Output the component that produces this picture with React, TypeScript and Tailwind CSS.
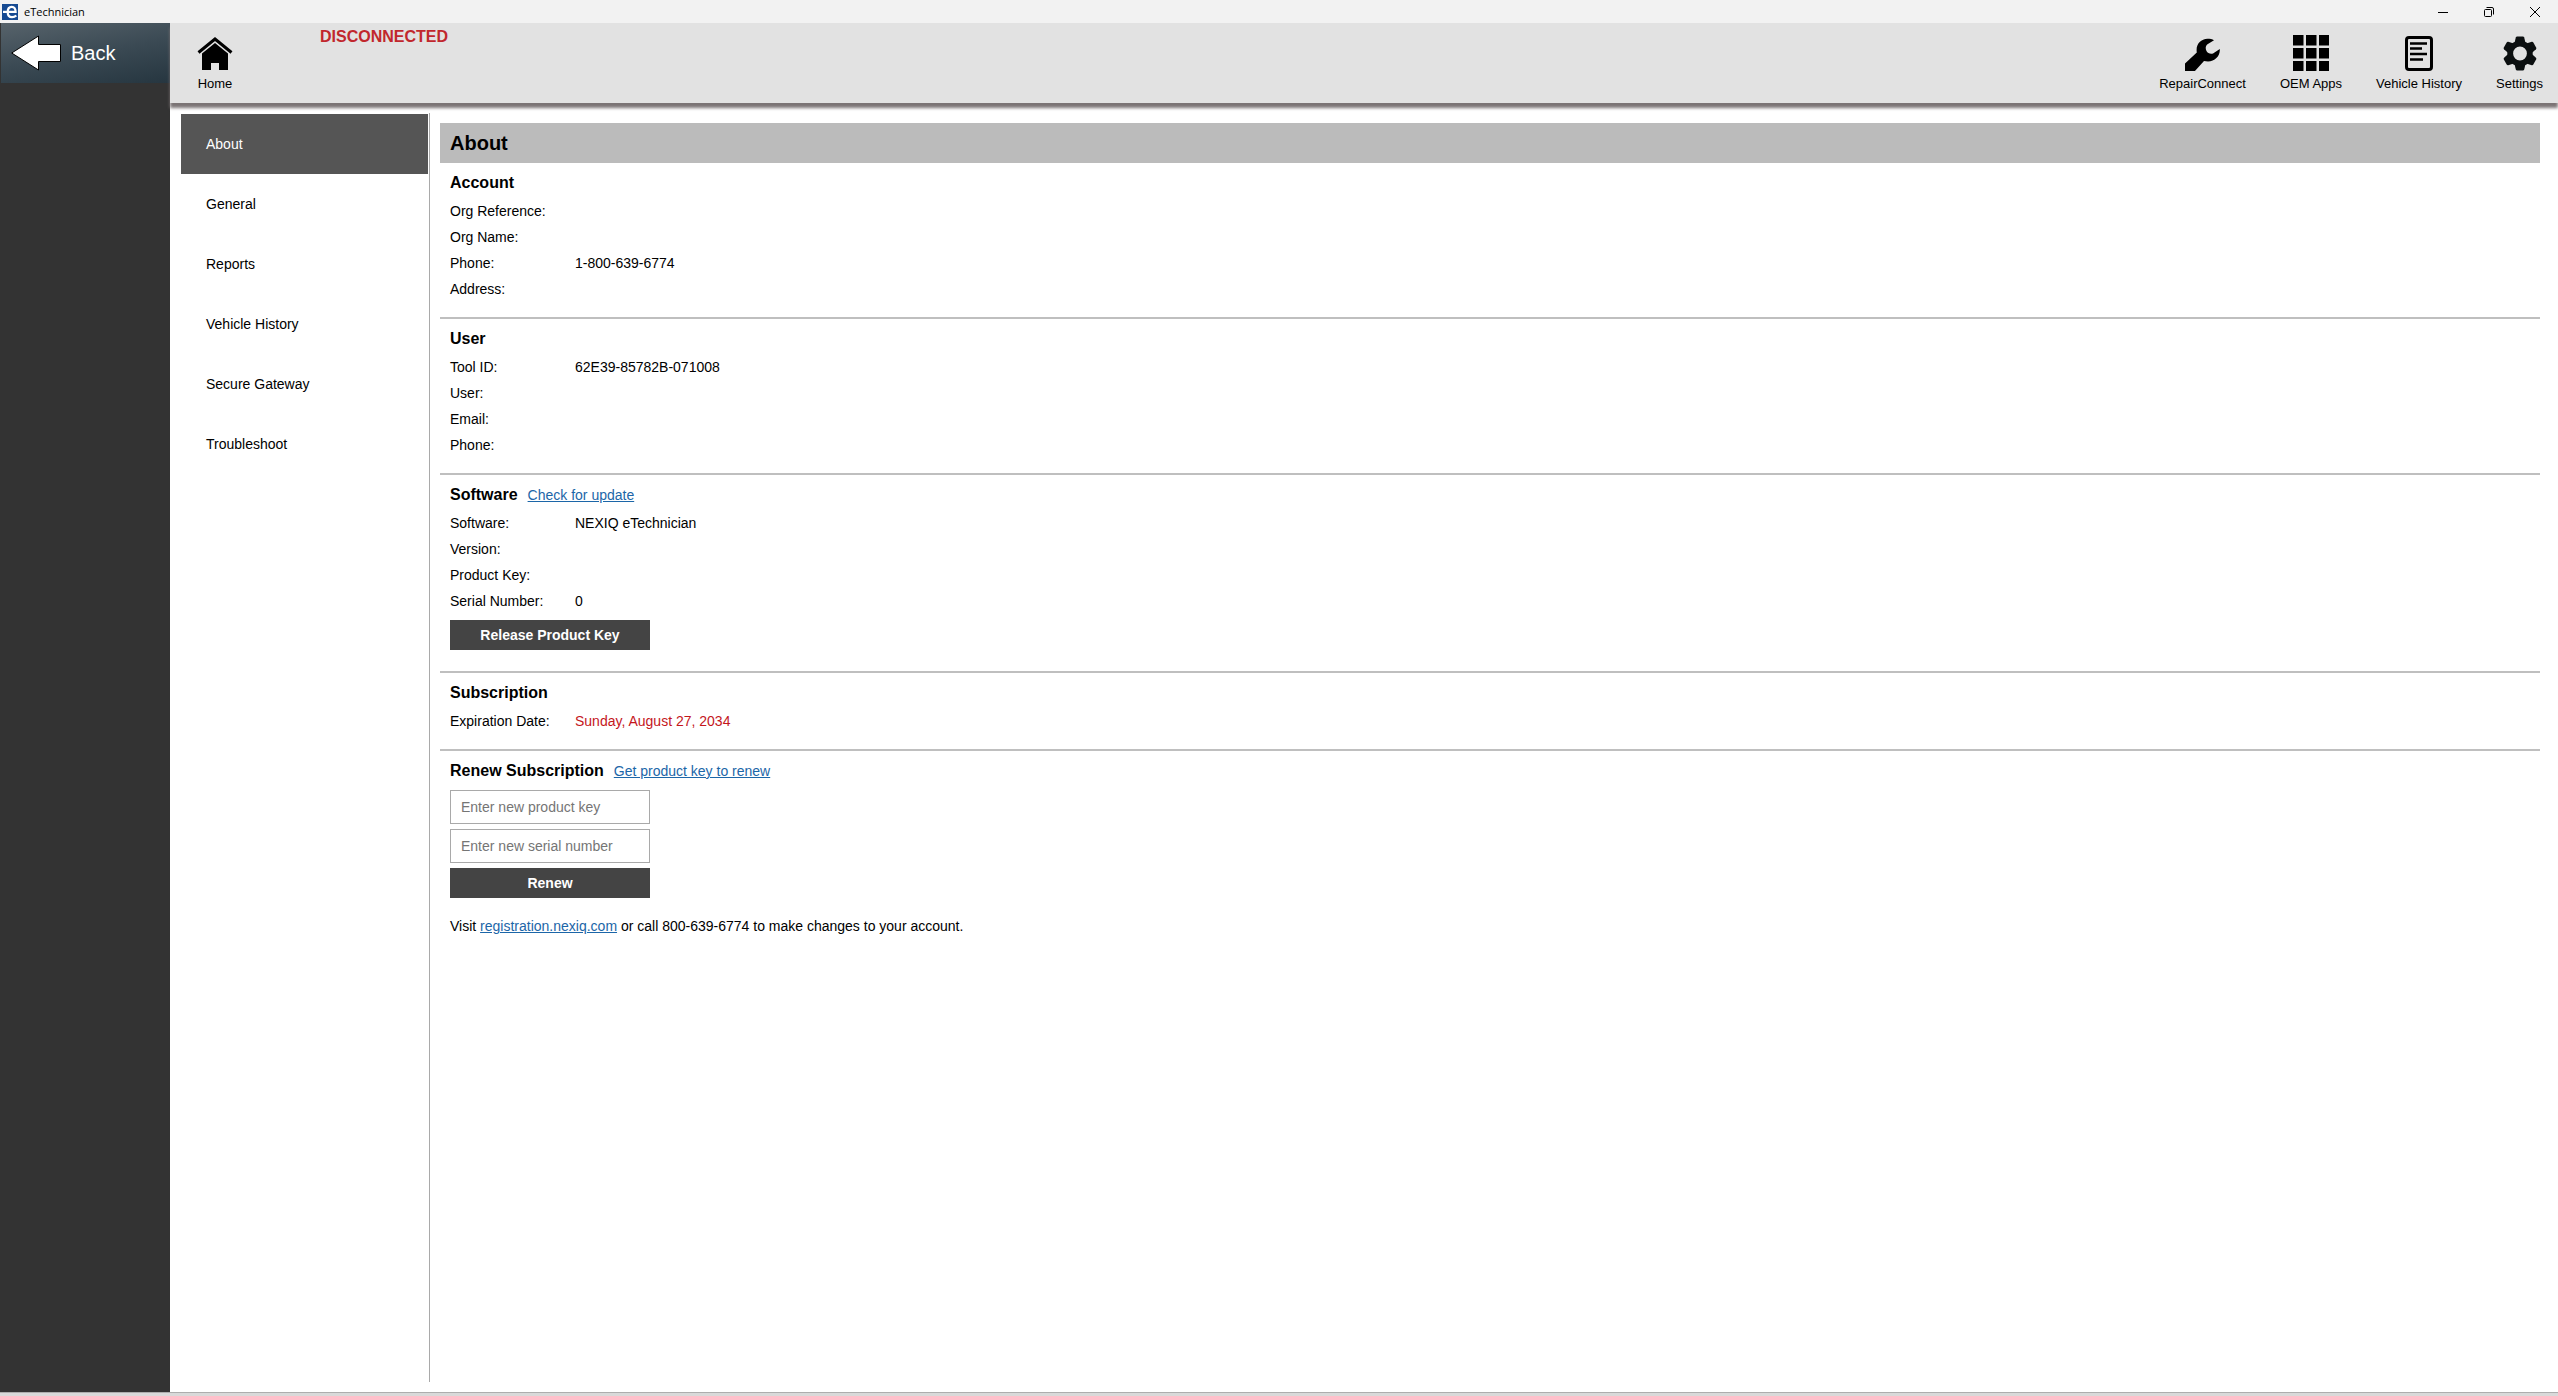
import { useState } from 'react'
import type { ReactNode } from 'react'

interface FieldRow {
    label: string
    value?: string
    alert?: boolean
}

interface SectionProps {
    title: string
    link?: string
    rows?: FieldRow[]
    last?: boolean
    children?: ReactNode
}

const MENU = ['About', 'General', 'Reports', 'Vehicle History', 'Secure Gateway', 'Troubleshoot']

const ACCOUNT: FieldRow[] = [
    { label: 'Org Reference:' },
    { label: 'Org Name:' },
    { label: 'Phone:', value: '1-800-639-6774' },
    { label: 'Address:' },
]

const USER: FieldRow[] = [
    { label: 'Tool ID:', value: '62E39-85782B-071008' },
    { label: 'User:' },
    { label: 'Email:' },
    { label: 'Phone:' },
]

const SOFTWARE: FieldRow[] = [
    { label: 'Software:', value: 'NEXIQ eTechnician' },
    { label: 'Version:' },
    { label: 'Product Key:' },
    { label: 'Serial Number:', value: '0' },
]

const SUBSCRIPTION: FieldRow[] = [
    { label: 'Expiration Date:', value: 'Sunday, August 27, 2034', alert: true },
]

function HomeIcon() {
    return (
        <svg width="36" height="36" viewBox="0 0 36 36">
            <path d="M1.500 17.500 18 4l16.500 13.500" fill="none" stroke="#000" strokeWidth="3" />
            <path d="M18 8 31 18.500V35h-9v-7h-8v7H5V18.500z" />
        </svg>
    )
}

function WrenchIcon() {
    return (
        <svg width="36" height="36" viewBox="0 0 36 36">
            <path d="M0 28.500 11.800 17.500C10.500 9.500 15.500 4 22.500 3.800c2.500 0 4.800.4 6.500 1.400l-6.500 4c-2 1.500-2.300 4.300-1 6.800 1.200 2.300 4 3.200 6.500 2.400l6.800-4.400c.6 7-4.800 12.400-11.800 12.500-1.500 0-2.800-.2-4-.4L9.500 36.500H0z" />
        </svg>
    )
}

function GridIcon() {
    return (
        <svg width="36" height="36" viewBox="0 0 36 36">
            {[0, 13, 26].map((y) =>
                [0, 13, 26].map((x) => <rect key={`${x}-${y}`} x={x} y={y} width="10.500" height="10.500" />)
            )}
        </svg>
    )
}

function HistoryIcon() {
    return (
        <svg width="36" height="36" viewBox="0 0 36 36">
            <rect x="5.500" y="2.500" width="25" height="32" rx="2.500" fill="none" stroke="#000" strokeWidth="3" />
            <path d="M9 8.500h17M9 13.500h12M9 19h17M9 24.500h13" stroke="#000" strokeWidth="2.500" />
        </svg>
    )
}

function GearIcon() {
    return (
        <svg width="36" height="36" viewBox="0 0 36 36">
            <g fill="#0b0f10">
                {[0, 60, 120, 180, 240, 300].map((deg) => (
                    <path
                        key={deg}
                        d="M12.500 8 13.800 2.500Q14.100 1.500 15.200 1.500h5.600Q21.900 1.500 22.200 2.500L23.500 8z"
                        transform={`rotate(${deg} 18 18.500)`}
                    />
                ))}
            </g>
            <circle cx="18" cy="18.500" r="9.800" fill="none" stroke="#0b0f10" strokeWidth="5.800" />
        </svg>
    )
}

const TOOLS = [
    { label: 'RepairConnect', icon: <WrenchIcon /> },
    { label: 'OEM Apps', icon: <GridIcon /> },
    { label: 'Vehicle History', icon: <HistoryIcon /> },
    { label: 'Settings', icon: <GearIcon /> },
]

function ToolButton({ label, icon }: { label: string; icon: ReactNode }) {
    return (
        <button className="flex flex-col items-center text-[13px] leading-4">
            <span className="mb-[5px] flex h-9 items-center justify-center">{icon}</span>
            {label}
        </button>
    )
}

function TitleBar() {
    return (
        <div className="flex h-[23px] shrink-0 items-center bg-[#f2f2f2]">
            <svg className="ml-0.5" width="16" height="16" viewBox="0 0 16 16">
                <rect width="16" height="16" fill="#164a92" />
                <path
                    d="M1 7.800h12.600C13.600 4.600 12.200 2.800 9.800 2.800 7.200 2.800 5.700 4.800 5.700 8s1.500 5.200 4.300 5.200c1.800 0 3.200-.6 4.300-1.700"
                    fill="none"
                    stroke="#fff"
                    strokeWidth="2.200"
                />
            </svg>
            <span className="ml-1.5 font-['Open_Sans',sans-serif] text-[11px] text-black">eTechnician</span>
            <div className="ml-auto flex">
                <button aria-label="Minimize" className="flex h-5 w-[46px] items-center justify-center">
                    <svg width="10" height="10" viewBox="0 0 10 10">
                        <path d="M0 5.500h10" stroke="#000" />
                    </svg>
                </button>
                <button aria-label="Restore" className="flex h-5 w-[46px] items-center justify-center">
                    <svg width="10" height="10" viewBox="0 0 10 10" fill="none" stroke="#000">
                        <rect x=".5" y="2.500" width="7" height="7" rx="1" />
                        <path d="M2.500.5H8A1.500 1.500 0 0 1 9.500 2v5.500" />
                    </svg>
                </button>
                <button aria-label="Close" className="flex h-5 w-[46px] items-center justify-center">
                    <svg width="10" height="10" viewBox="0 0 10 10">
                        <path d="m0 0 10 10M10 0 0 10" stroke="#000" />
                    </svg>
                </button>
            </div>
        </div>
    )
}

function Section({ title, link, rows = [], last, children }: SectionProps) {
    return (
        <section className={last ? 'px-2.5 pt-2' : 'border-b-2 border-[#bfbfbf] px-2.5 pt-2 pb-[15px]'}>
            <div className="mb-[3px] flex h-6 items-center gap-2.5">
                <h2 className="text-base font-bold">{title}</h2>
                {link && (
                    <a href="#" className="text-[#1c66a8] underline">
                        {link}
                    </a>
                )}
            </div>
            <dl>
                {rows.map((row) => (
                    <div key={row.label} className="flex h-[26px] items-center">
                        <dt className="w-[125px]">{row.label}</dt>
                        <dd className={row.alert ? 'text-[#c4161c]' : ''}>{row.value}</dd>
                    </div>
                ))}
            </dl>
            {children}
        </section>
    )
}

export default function App() {
    const [active, setActive] = useState('About')
    const [productKey, setProductKey] = useState('')
    const [serial, setSerial] = useState('')

    return (
        <div className="flex min-h-screen flex-col bg-white font-['Liberation_Sans',Arial,sans-serif] text-sm text-black">
            <TitleBar />

            <div className="flex flex-1">
                <aside className="w-[170px] shrink-0 bg-[#333]">
                    <button className="ml-px flex h-[60px] w-[169px] items-center gap-2.5 bg-linear-170 from-[#57636b] via-[#3b4a54] to-[#263640] pl-2.5 text-xl text-white">
                        <svg width="50" height="36" viewBox="0 0 50 36">
                            <path d="M.700 18 27.500 1v8.500H49.500v17H27.500V35z" fill="#fff" stroke="#000" />
                        </svg>
                        Back
                    </button>
                </aside>

                <div className="flex min-w-0 flex-1 flex-col">
                    <header className="flex h-20 shrink-0 items-start bg-[#e2e2e2] pt-3 pr-[15px] pl-[27px] shadow-[0_5px_3px_0px_#7b7475]">
                        <ToolButton label="Home" icon={<HomeIcon />} />
                        <strong className="-mt-2.5 ml-[87px] text-base text-[#c1272d]">DISCONNECTED</strong>
                        <nav className="ml-auto flex gap-[34px]">
                            {TOOLS.map((tool) => (
                                <ToolButton key={tool.label} label={tool.label} icon={tool.icon} />
                            ))}
                        </nav>
                    </header>

                    <div className="flex flex-1 pt-2.5 pr-[18px] pb-2.5 pl-[11px]">
                        <nav className="flex w-[249px] shrink-0 flex-col border-r border-[#a9a9a9] pt-px pr-px">
                            {MENU.map((item) => (
                                <button
                                    key={item}
                                    onClick={() => setActive(item)}
                                    className={`h-[60px] pl-[25px] text-left ${
                                        item === active ? 'bg-[#555] text-white' : 'text-black'
                                    }`}
                                >
                                    {item}
                                </button>
                            ))}
                        </nav>

                        <main className="ml-2.5 flex-1 pt-2.5">
                            <h1 className="flex h-10 items-center bg-[#bbb] px-2.5 text-xl font-bold">{active}</h1>

                            <Section title="Account" rows={ACCOUNT} />
                            <Section title="User" rows={USER} />
                            <Section title="Software" link="Check for update" rows={SOFTWARE}>
                                <button className="my-1.5 h-[30px] w-[200px] bg-[#444] font-bold text-white">
                                    Release Product Key
                                </button>
                            </Section>
                            <Section title="Subscription" rows={SUBSCRIPTION} />
                            <Section title="Renew Subscription" link="Get product key to renew" last>
                                <form
                                    className="flex w-[200px] flex-col gap-[5px] pt-1"
                                    onSubmit={(e) => e.preventDefault()}
                                >
                                    <input
                                        aria-label="Product key"
                                        placeholder="Enter new product key"
                                        value={productKey}
                                        onChange={(e) => setProductKey(e.target.value)}
                                        className="h-[34px] border border-[#a9a9a9] px-2.5 placeholder:text-[#757575]"
                                    />
                                    <input
                                        aria-label="Serial number"
                                        placeholder="Enter new serial number"
                                        value={serial}
                                        onChange={(e) => setSerial(e.target.value)}
                                        className="h-[34px] border border-[#a9a9a9] px-2.5 placeholder:text-[#757575]"
                                    />
                                    <button className="h-[30px] bg-[#444] font-bold text-white">Renew</button>
                                </form>
                                <p className="mt-[18px]">
                                    Visit{' '}
                                    <a href="#" className="text-[#1c66a8] underline">
                                        registration.nexiq.com
                                    </a>{' '}
                                    or call 800-639-6774 to make changes to your account.
                                </p>
                            </Section>
                        </main>
                    </div>
                </div>
            </div>

            <footer className="h-1 shrink-0 border-t border-[#adadad] bg-[#d9d9d9]" />
        </div>
    )
}
